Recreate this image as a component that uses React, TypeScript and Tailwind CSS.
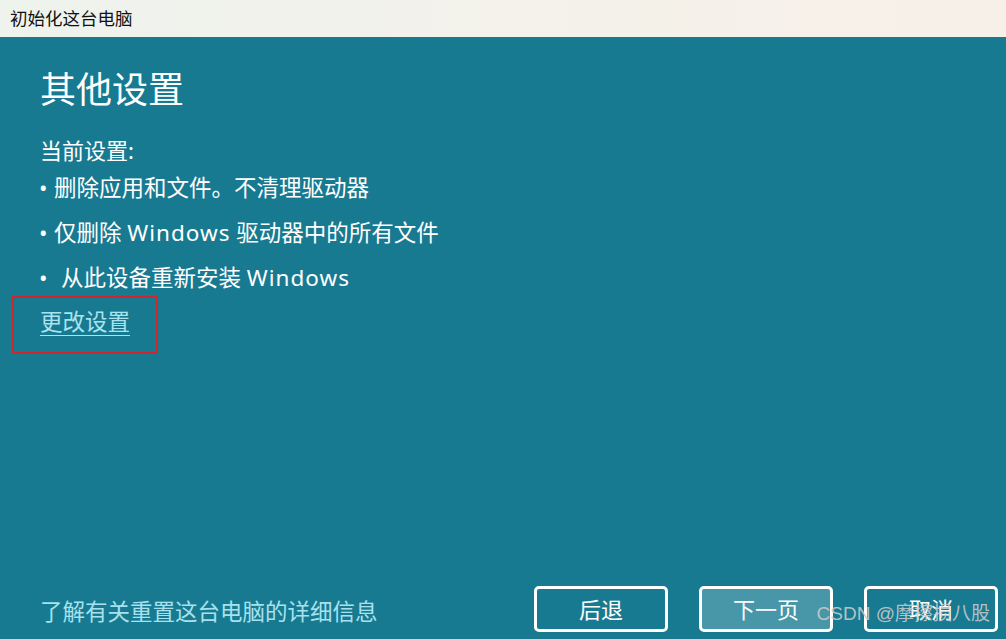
import React from "react";

export default function App() {
  const font = { fontFamily: '"Noto Sans", "Noto Sans CJK SC", sans-serif' };
  return (
    <div
      className="relative w-[1006px] h-[639px] flex flex-col overflow-hidden"
      style={font}
    >
      <div className="h-[37px] shrink-0 flex items-center pl-[10px] bg-gradient-to-r from-[#eef3ed] to-[#f8f0e8] text-[17.5px] text-[#111]">
        初始化这台电脑
      </div>
      <div className="flex-1 flex flex-col bg-[#187a91] text-white">
        <div className="flex-1 flex flex-col pl-[40px] pt-[34px]">
          <div className="text-[36px] leading-[38px]">其他设置</div>
          <div className="mt-[26px] text-[22px] leading-[30px]">当前设置:</div>
          <div className="text-[22.5px] leading-[45px]">
            <div className="flex">
              <span className="w-[15px] -ml-[1px]">•</span>
              <span>删除应用和文件。不清理驱动器</span>
            </div>
            <div className="flex">
              <span className="w-[15px] -ml-[1px]">•</span>
              <span>
                仅删除 <span className="tracking-[1px]">Windows</span> 驱动器中的所有文件
              </span>
            </div>
            <div className="flex">
              <span className="w-[22px] -ml-[1px]">•</span>
              <span>
                从此设备重新安装 <span className="tracking-[1px]">Windows</span>
              </span>
            </div>
          </div>
          <div className="-ml-[28px] -mt-[4px] w-[146px] h-[58px] border-2 border-[#d3262b] pl-[26px] pt-[9px]">
            <span className="text-[22.5px] leading-[30px] text-[#a9e3ef] underline underline-offset-[5px] decoration-1">
              更改设置
            </span>
          </div>
        </div>
        <div className="flex items-center justify-between pl-[40px] pr-[8px] pb-[7px]">
          <span className="text-[22.5px] leading-[30px] text-[#a6e2ee] mt-[6px]">
            了解有关重置这台电脑的详细信息
          </span>
          <div className="flex gap-[31px]">
            <button className="w-[134px] h-[46px] rounded-[5px] border-[3px] border-white text-[22px] text-white flex items-center justify-center">
              后退
            </button>
            <button className="w-[134px] h-[46px] rounded-[5px] border-[3px] border-white bg-[#4797a8] text-[22px] text-white flex items-center justify-center">
              下一页
            </button>
            <button className="w-[134px] h-[46px] rounded-[5px] border-[3px] border-white text-[22px] text-white flex items-center justify-center">
              取消
            </button>
          </div>
        </div>
      </div>
      <div
        className="absolute right-[16px] bottom-[12px] text-[19px] leading-[26px] text-[#c9cccd]/90"
        style={{ fontFamily: '"Liberation Sans", "Noto Sans CJK SC", sans-serif' }}
      >
        CSDN @摩擦损八股
      </div>
    </div>
  );
}
